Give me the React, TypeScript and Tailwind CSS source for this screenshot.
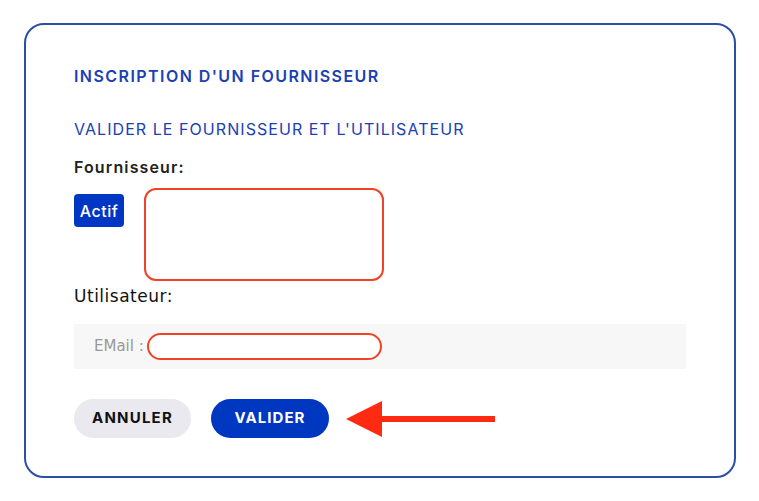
import React from 'react';

const font = { fontFamily: 'Inter, "Noto Sans", sans-serif' };
const alt = { fontFamily: '"DejaVu Sans", sans-serif' };

export default function App() {
  return (
    <div className="w-[759px] h-[501px] bg-white pl-[24px] pt-[23px]" style={font}>
      <div className="w-[712px] h-[455px] rounded-[20px] border-2 border-[#2d4fa3] px-[48px] pt-[41px]">
        <h1 className="text-[16px] leading-[20px] font-semibold text-[#1a40b3] tracking-[0.09em]">
          INSCRIPTION D'UN FOURNISSEUR
        </h1>
        <h2 className="mt-[33px] text-[16px] leading-[20px] text-[#1a40b3] tracking-[0.066em]">
          VALIDER LE FOURNISSEUR ET L'UTILISATEUR
        </h2>
        <p className="mt-[18px] text-[16px] leading-[20px] font-semibold text-[#222] tracking-[0.07em]">
          Fournisseur:
        </p>
        <div className="mt-[11px] flex items-start gap-[20px]">
          <span className="mt-[6px] h-[33px] w-[50px] rounded-[4px] bg-[#0036c4] text-white text-[16px] font-medium tracking-[0.03em] flex items-center justify-center">
            Actif
          </span>
          <div className="h-[93px] w-[240px] rounded-[12px] border-2 border-[#f04325]" />
        </div>
        <p className="mt-[5px] text-[17px] leading-[20px] font-medium text-[#111] tracking-[0.03em]" style={alt}>
          Utilisateur:
        </p>
        <div className="mt-[18px] h-[45px] w-[612px] bg-[#f7f7f7] flex items-center pl-[20px]">
          <span className="text-[15px] text-[#999] mr-[3px]" style={alt}>
            EMail :
          </span>
          <div className="h-[27px] w-[235px] rounded-full border-2 border-[#f04325] bg-white" />
        </div>
        <div className="mt-[30px] flex items-center">
          <button className="h-[39px] w-[117px] rounded-full bg-[#e9e9ef] text-[15px] font-bold tracking-[0.08em] text-[#111]">
            ANNULER
          </button>
          <button className="ml-[20px] h-[39px] w-[118px] rounded-full bg-[#0037c1] text-[15px] font-bold tracking-[0.07em] text-white">
            VALIDER
          </button>
          <svg className="ml-[17px]" width="150" height="38" viewBox="0 0 150 38">
            <polygon points="0,19 36,1 36,37" fill="#ff2a12" />
            <rect x="34" y="16" width="115" height="6" fill="#ff2a12" />
          </svg>
        </div>
      </div>
    </div>
  );
}
